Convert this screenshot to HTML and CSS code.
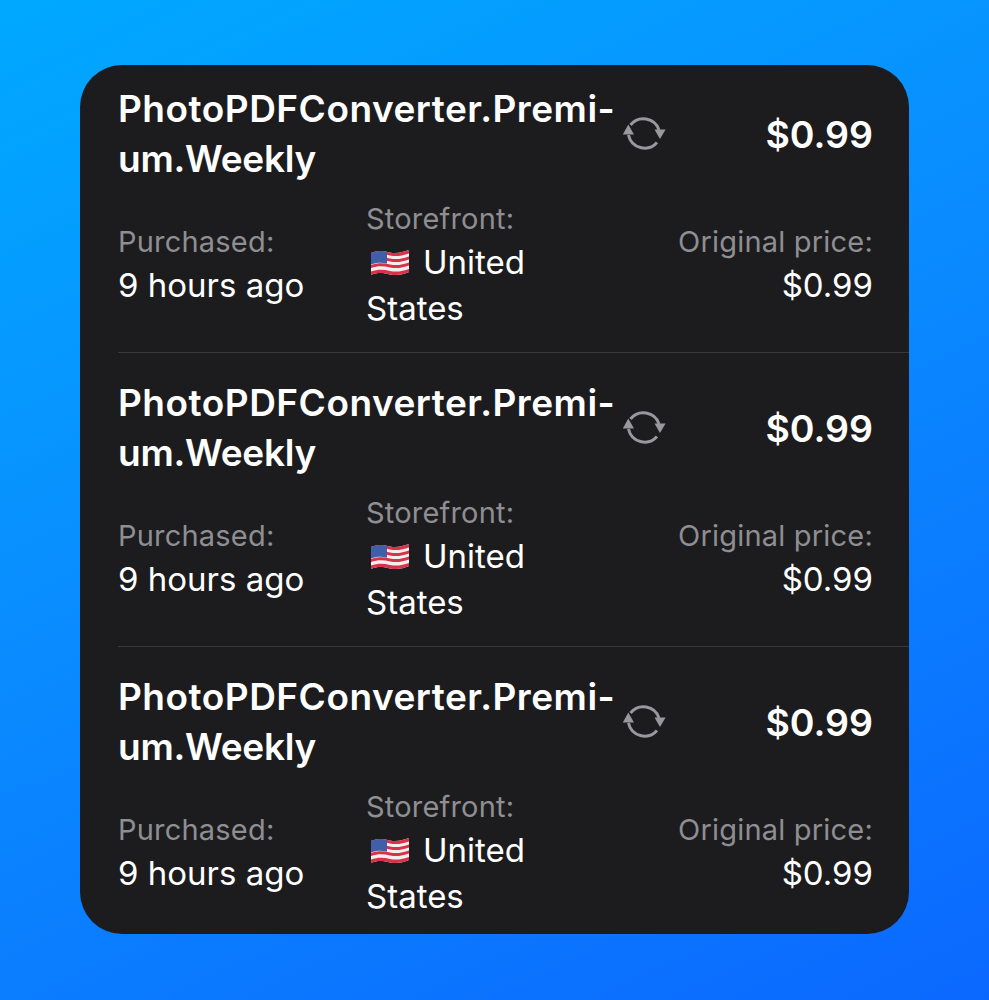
FILE: index.html
```html
<!DOCTYPE html>
<html lang="en">
    <head>
        <meta charset="utf-8">
        <title>Purchases</title>
        <link rel="stylesheet" href="styles.css">
    </head>
    <body>
    <svg class="defs" width="0" height="0">
        <defs>
            <symbol id="renew" viewBox="0 0 44 40">
                <path d="M8.500 13A16.500 16.500 0 0 1 37 18" fill="none" stroke="currentColor" stroke-width="3"/>
                <path d="M6.500 23A16.500 16.500 0 0 0 35 30.500" fill="none" stroke="currentColor" stroke-width="3"/>
                <path d="M6.300 12.500L12 22.500H0.800Z" fill="currentColor"/>
                <path d="M38 27L32.500 17.500H43.600Z" fill="currentColor"/>
            </symbol>
            <symbol id="flag" viewBox="0 0 40 28">
                <path d="M1 4C9 1 14 2 20 3.500C27 5 33 3 39 1V23C33 25.500 27 27 20 25.500C14 24 8 23 1 26Z" fill="#f4eeee"/>
                <path d="M1 4C9 1 14 2 20 3.500C27 5 33 3 39 1V4.500C33 6.500 27 8 20 6.500C14 5 8 4.500 1 7ZM1 10C8 7.500 14 8 20 9.500C27 11 33 9.500 39 7.500V10.500C33 12.500 27 14 20 12.500C14 11 8 10.500 1 13ZM1 16C8 13.500 14 14 20 15.500C27 17 33 15.500 39 13.500V16.500C33 18.500 27 20 20 18.500C14 17 8 16.500 1 19ZM1 22.500C8 20 14 20.500 20 22C27 23.500 33 22 39 20V23C33 25.500 27 27 20 25.500C14 24 8 23 1 26Z" fill="#d8324a"/>
                <path d="M1 4C6 2.200 10 1.800 17 2.800V14.500C11 13 6 13.500 1 15.500Z" fill="#3f5fa8"/>
            </symbol>
        </defs>
    </svg>
    <ul class="card">
        <li class="row">
            <div class="top">
                <h2 class="name">PhotoPDFConverter.Premi-<br><span class="tail">um.Weekly</span></h2>
                <svg class="renew"><use href="#renew"/></svg>
                <span class="price">$0.99</span>
            </div>
            <div class="info">
                <div class="col col-date"><span class="label">Purchased:</span><span>9 hours ago</span></div>
                <div class="col col-store"><span class="label">Storefront:</span><span><svg class="flag"><use href="#flag"/></svg>United<br>States</span></div>
                <div class="col col-orig"><span class="label">Original price:</span><span>$0.99</span></div>
            </div>
        </li>
        <li class="row">
            <div class="top">
                <h2 class="name">PhotoPDFConverter.Premi-<br><span class="tail">um.Weekly</span></h2>
                <svg class="renew"><use href="#renew"/></svg>
                <span class="price">$0.99</span>
            </div>
            <div class="info">
                <div class="col col-date"><span class="label">Purchased:</span><span>9 hours ago</span></div>
                <div class="col col-store"><span class="label">Storefront:</span><span><svg class="flag"><use href="#flag"/></svg>United<br>States</span></div>
                <div class="col col-orig"><span class="label">Original price:</span><span>$0.99</span></div>
            </div>
        </li>
        <li class="row">
            <div class="top">
                <h2 class="name">PhotoPDFConverter.Premi-<br><span class="tail">um.Weekly</span></h2>
                <svg class="renew"><use href="#renew"/></svg>
                <span class="price">$0.99</span>
            </div>
            <div class="info">
                <div class="col col-date"><span class="label">Purchased:</span><span>9 hours ago</span></div>
                <div class="col col-store"><span class="label">Storefront:</span><span><svg class="flag"><use href="#flag"/></svg>United<br>States</span></div>
                <div class="col col-orig"><span class="label">Original price:</span><span>$0.99</span></div>
            </div>
        </li>
    </ul>
    </body>
</html>
```
FILE: styles.css
```css
html,body{
    margin:0;
    height:100%;
}
body{
    width:989px;
    height:1000px;
    overflow:hidden;
    padding:65px 0 0 80px;
    box-sizing:border-box;
    background:linear-gradient(155deg,#00a9ff 0%,#0a8cff 45%,#0b68ff 100%);
    font-family:"Inter","Liberation Sans",sans-serif;
    color:#fff;
}
.defs{
    display:block;
    height:0;
}
.card{
    list-style:none;
    margin:0;
    padding:0;
    width:829px;
    height:869px;
    background:#1c1c1e;
    border-radius:42px;
    overflow:hidden;
}
.row{
    height:294px;
    margin-left:38px;
    padding:25px 36px 0 0;
    box-sizing:border-box;
    border-bottom:1px solid #38383a;
}
.row:first-child{
    height:288px;
    padding-top:19px;
}
.row:last-child{
    border-bottom:none;
}
.top{
    display:flex;
    align-items:center;
    height:100px;
}
.name{
    margin:0;
    width:505px;
    font-size:37px;
    line-height:50px;
    font-weight:600;
    letter-spacing:0.5px;
    white-space:nowrap;
}
.tail{
    letter-spacing:-0.25px;
}
.renew{
    flex:none;
    width:44px;
    height:40px;
    margin:-4px 0 0 -1px;
    color:#98989d;
}
.price{
    margin-left:auto;
    font-size:37.5px;
    font-weight:600;
}
.info{
    display:flex;
    align-items:center;
    margin-top:12px;
    font-size:33px;
    line-height:46px;
}
.col{
    display:flex;
    flex-direction:column;
}
.col-date{
    width:248px;
}
.col-store{
    width:200px;
}
.col-orig{
    flex:1;
    text-align:right;
}
.label{
    color:#8e8e93;
    font-size:29px;
    line-height:45px;
    margin-bottom:-2px;
    letter-spacing:0.2px;
}
.flag{
    width:40px;
    height:28px;
    margin:0 13px 0 4px;
    vertical-align:-3px;
}
```
